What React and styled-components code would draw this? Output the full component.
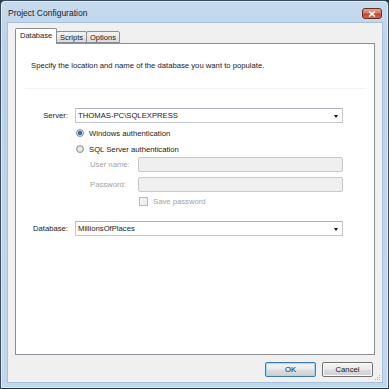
import React from "react";
import styled, { createGlobalStyle } from "styled-components";

const GlobalStyle = createGlobalStyle`
  html, body {
    margin: 0;
    padding: 0;
    background: #1d3b44;
  }
  body {
    font-family: "Liberation Sans", Arial, sans-serif;
    font-size: 8px;
    color: #1a1a1a;
  }
`;

const Window = styled.div`
  width: 389px;
  height: 389px;
  box-sizing: border-box;
  display: flex;
  flex-direction: column;
  border: 1px solid #3a4d60;
  border-bottom-color: #17343c;
  border-radius: 5px 5px 0 0;
  background: linear-gradient(180deg, #c7dbef 0%, #bcd2ea 12%, #c3d7ec 100%);
  padding: 0 5px 5px 6px;
  box-shadow: inset 0 0 0 1px #e2ecf7;
`;

const TitleBar = styled.div`
  height: 21px;
  display: flex;
  align-items: center;
  justify-content: space-between;
  padding: 0 1px 0 1px;
`;

const Title = styled.span`
  font-size: 8.5px;
  color: #1b1b1b;
  margin-top: 2px;
`;

const CloseButton = styled.div`
  width: 20px;
  height: 11px;
  margin-top: 4px;
  box-sizing: border-box;
  border: 1px solid #6d2c22;
  border-radius: 3px;
  background: linear-gradient(180deg, #e6a394 0%, #d57865 45%, #c2442c 55%, #d26a4e 100%);
  display: flex;
  align-items: center;
  justify-content: center;
`;

const Client = styled.div`
  flex: 1;
  display: flex;
  flex-direction: column;
  position: relative;
  background: #f0f0f0;
  border: 1px solid #a7c1dc;
  padding: 5px 7px 5px 7px;
`;

const TabStrip = styled.div`
  display: flex;
  align-items: flex-end;
  height: 15px;
  position: relative;
  z-index: 1;
`;

const Tab = styled.div`
  box-sizing: border-box;
  height: ${({ $active }) => ($active ? "16px" : "12px")};
  margin-bottom: ${({ $active }) => ($active ? "-1px" : "0")};
  margin-left: ${({ $first }) => ($first ? "0" : "-1px")};
  padding: 0 ${({ $active }) => ($active ? "4px" : "3px")};
  display: flex;
  align-items: center;
  padding-bottom: ${({ $active }) => ($active ? "2px" : "0")};
  border: 1px solid #8b8e95;
  border-bottom: ${({ $active }) => ($active ? "none" : "1px solid #8b8e95")};
  border-radius: 2px 2px 0 0;
  background: ${({ $active }) =>
    $active ? "#ffffff" : "linear-gradient(180deg, #f3f3f3 0%, #e8e8e8 50%, #d9d9d9 100%)"};
  font-size: 7.5px;
  color: #1a1a1a;
  z-index: ${({ $active }) => ($active ? 2 : 1)};
`;

const Panel = styled.div`
  flex: 1;
  background: #ffffff;
  border: 1px solid #8b8e95;
  padding: 17px 15px 0 15px;
  display: flex;
  flex-direction: column;
`;

const Intro = styled.div`
  font-size: 7.7px;
  line-height: 10px;
`;

const Separator = styled.div`
  height: 1px;
  background: #f2f2f2;
  margin: 17px -6px 19px -6px;
`;

const FieldRow = styled.div`
  display: grid;
  grid-template-columns: 37px 268px;
  column-gap: 7px;
  align-items: center;
  margin-top: ${({ $top }) => $top || 0}px;
`;

const Label = styled.span`
  text-align: right;
  font-size: 7.7px;
  white-space: nowrap;
`;

const Combo = styled.div`
  box-sizing: border-box;
  height: 15px;
  border: 1px solid #c3c6cc;
  border-top-color: #aeb1b7;
  border-radius: 1px;
  background: #ffffff;
  display: flex;
  align-items: center;
  justify-content: space-between;
  padding: 0 4px 0 2px;
  font-size: 7.7px;
`;

const Arrow = styled.span`
  width: 0;
  height: 0;
  border-left: 2.5px solid transparent;
  border-right: 2.5px solid transparent;
  border-top: 3px solid #111;
  margin-top: 1px;
`;

const AuthBlock = styled.div`
  margin-left: 44px;
  margin-top: 4px;
  display: flex;
  flex-direction: column;
`;

const OptionRow = styled.div`
  display: flex;
  align-items: center;
  height: 12px;
  gap: 5px;
  margin-top: ${({ $top }) => $top || 0}px;
  margin-left: ${({ $left }) => $left || 0}px;
  font-size: 7.7px;
  color: ${({ $disabled }) => ($disabled ? "#a3a3a3" : "#1a1a1a")};
`;

const Radio = styled.span`
  box-sizing: border-box;
  width: 8px;
  height: 8px;
  margin-left: 1px;
  border-radius: 50%;
  border: 1px solid #8d8d8d;
  background: ${({ $checked }) =>
    $checked
      ? "radial-gradient(circle, #3a8fd0 0%, #1c5f95 45%, #e8e8e8 55%, #d7d7d7 100%)"
      : "radial-gradient(circle, #f2f2f2 0%, #d6d6d6 100%)"};
`;

const Credentials = styled.div`
  margin-left: 15px;
  margin-top: 2px;
  display: flex;
  flex-direction: column;
  gap: 5px;
`;

const CredRow = styled.div`
  display: grid;
  grid-template-columns: 48px 205px;
  align-items: center;
`;

const DisabledLabel = styled.span`
  font-size: 7.7px;
  color: #a3a3a3;
  white-space: nowrap;
`;

const DisabledInput = styled.div`
  box-sizing: border-box;
  height: 15px;
  border: 1px solid #c9c9c9;
  border-radius: 2px;
  background: #efefef;
`;

const CheckBox = styled.span`
  box-sizing: border-box;
  width: 9px;
  height: 9px;
  border: 1px solid #b9b9b9;
  background: linear-gradient(135deg, #f7f7f7, #ececec);
`;

const ButtonRow = styled.div`
  display: flex;
  justify-content: flex-end;
  gap: 6px;
  margin-top: 7px;
  padding-right: 2px;
`;

const Button = styled.div`
  box-sizing: border-box;
  width: 51px;
  height: 15px;
  border: 1px solid ${({ $default }) => ($default ? "#3d7bad" : "#707070")};
  border-radius: 2px;
  background: linear-gradient(180deg, #f3f3f3 0%, #ebebeb 48%, #dddddd 52%, #cfcfcf 100%);
  box-shadow: ${({ $default }) => ($default ? "inset 0 0 0 1px #a6d8f5" : "inset 0 0 0 1px #fbfbfb")};
  display: flex;
  align-items: center;
  justify-content: center;
  font-size: 7.7px;
  color: #1a1a1a;
`;

const Grip = styled.svg`
  position: absolute;
  right: 1px;
  bottom: 1px;
`;

export default function App() {
  return (
    <>
      <GlobalStyle />
      <Window>
        <TitleBar>
          <Title>Project Configuration</Title>
          <CloseButton>
            <svg width="8" height="6" viewBox="0 0 8 6">
              <path d="M1 0.5 L7 5.5 M7 0.5 L1 5.5" stroke="#ffffff" strokeWidth="1.6" />
            </svg>
          </CloseButton>
        </TitleBar>
        <Client>
          <TabStrip>
            <Tab $active $first>Database</Tab>
            <Tab>Scripts</Tab>
            <Tab>Options</Tab>
          </TabStrip>
          <Panel>
            <Intro>Specify the location and name of the database you want to populate.</Intro>
            <Separator />
            <FieldRow>
              <Label>Server:</Label>
              <Combo>
                THOMAS-PC\SQLEXPRESS
                <Arrow />
              </Combo>
            </FieldRow>
            <AuthBlock>
              <OptionRow>
                <Radio $checked />
                Windows authentication
              </OptionRow>
              <OptionRow $top={4}>
                <Radio />
                SQL Server authentication
              </OptionRow>
              <Credentials>
                <CredRow>
                  <DisabledLabel>User name:</DisabledLabel>
                  <DisabledInput />
                </CredRow>
                <CredRow>
                  <DisabledLabel>Password:</DisabledLabel>
                  <DisabledInput />
                </CredRow>
                <OptionRow $disabled $left={49} $top={-2}>
                  <CheckBox />
                  Save password
                </OptionRow>
              </Credentials>
            </AuthBlock>
            <FieldRow $top={14}>
              <Label>Database:</Label>
              <Combo>
                MillionsOfPlaces
                <Arrow />
              </Combo>
            </FieldRow>
          </Panel>
          <ButtonRow>
            <Button $default>OK</Button>
            <Button>Cancel</Button>
          </ButtonRow>
          <Grip width="6" height="6" viewBox="0 0 6 6">
            <rect x="4" y="0" width="1" height="1" fill="#b0b0b0" />
            <rect x="2" y="2" width="1" height="1" fill="#b0b0b0" />
            <rect x="4" y="2" width="1" height="1" fill="#b0b0b0" />
            <rect x="0" y="4" width="1" height="1" fill="#b0b0b0" />
            <rect x="2" y="4" width="1" height="1" fill="#b0b0b0" />
            <rect x="4" y="4" width="1" height="1" fill="#b0b0b0" />
          </Grip>
        </Client>
      </Window>
    </>
  );
}
